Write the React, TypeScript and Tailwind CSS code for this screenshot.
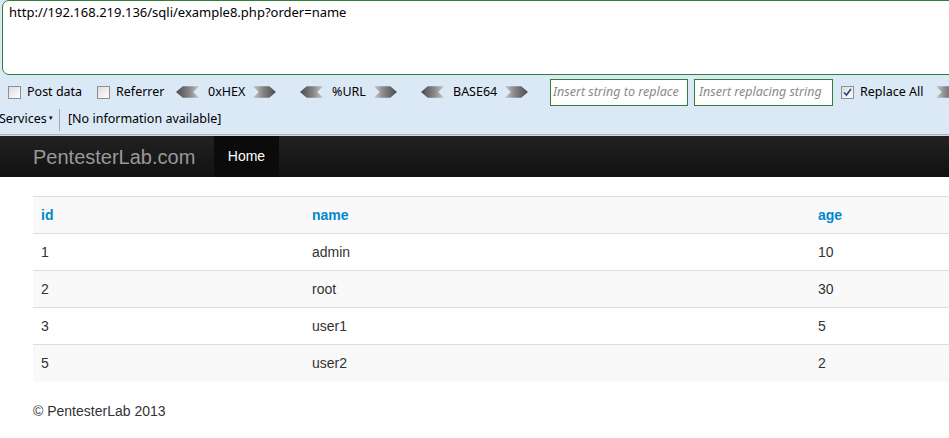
import React from 'react';

const ArrowLeft: React.FC = () => (
  <svg width="23" height="12" viewBox="0 0 24 12" className="shrink-0">
    <defs>
      <linearGradient id="gl" x1="0" y1="0" x2="1" y2="0">
        <stop offset="0" stopColor="#4a4a4a" />
        <stop offset="0.6" stopColor="#8a8a8a" />
        <stop offset="1" stopColor="#c8c8c8" />
      </linearGradient>
    </defs>
    <polygon points="0,6 7,0 24,0 18,6 24,12 7,12" fill="url(#gl)" />
  </svg>
);

const ArrowRight: React.FC = () => (
  <svg width="23" height="12" viewBox="0 0 24 12" className="shrink-0">
    <defs>
      <linearGradient id="gr" x1="0" y1="0" x2="1" y2="0">
        <stop offset="0" stopColor="#c8c8c8" />
        <stop offset="0.4" stopColor="#8a8a8a" />
        <stop offset="1" stopColor="#4a4a4a" />
      </linearGradient>
    </defs>
    <polygon points="0,0 17,0 24,6 17,12 0,12 6,6" fill="url(#gr)" />
  </svg>
);

const Box: React.FC<{ checked?: boolean }> = ({ checked }) => (
  <span className="w-[13px] h-[13px] border border-[#8e8f8f] bg-gradient-to-br from-[#dcdcdc] to-white flex items-center justify-center shrink-0">
    {checked && (
      <svg width="9" height="9" viewBox="0 0 9 9">
        <path d="M1 4.5 L3.5 7 L8 1" stroke="#2a3f8f" strokeWidth="1.6" fill="none" />
      </svg>
    )}
  </span>
);

const rows = [
  ['1', 'admin', '10'],
  ['2', 'root', '30'],
  ['3', 'user1', '5'],
  ['5', 'user2', '2'],
];

export default function App() {
  return (
    <div className="w-[949px] h-[438px] overflow-hidden bg-white">
      <div className="bg-[#dbe8f6] font-['Noto_Sans',sans-serif] text-[12.5px] text-black">
        <div className="pl-[2px] pt-0 pb-[3px]">
          <div className="w-[980px] h-[75px] bg-white border border-[#2f7f36] rounded-l-[7px] px-[6px] pt-[2px] leading-[18px] text-[13px]">
            http://192.168.219.136/sqli/example8.php?order=name
          </div>
        </div>
        <div className="h-[27px] flex items-center whitespace-nowrap pt-[1px]">
          <div className="flex items-center pl-[8px] gap-[6px] w-[97px] shrink-0">
            <Box />
            <span>Post data</span>
          </div>
          <div className="flex items-center gap-[6px] w-[79px] shrink-0">
            <Box />
            <span>Referrer</span>
          </div>
          <div className="flex items-center w-[124px] shrink-0">
            <ArrowLeft />
            <span className="ml-[9px] w-[45px]">0xHEX</span>
            <ArrowRight />
          </div>
          <div className="flex items-center w-[121px] shrink-0">
            <ArrowLeft />
            <span className="ml-[9px] w-[42px]">%URL</span>
            <ArrowRight />
          </div>
          <div className="flex items-center w-[129px] shrink-0">
            <ArrowLeft />
            <span className="ml-[9px] w-[52px]">BASE64</span>
            <ArrowRight />
          </div>
          <div className="w-[138px] h-[27px] shrink-0 bg-white border border-[#2f7f36] italic text-[12.5px] text-[#8a8a8a] flex items-center pl-[2px] overflow-hidden">
            Insert string to replace
          </div>
          <div className="ml-[6px] w-[139px] h-[27px] shrink-0 bg-white border border-[#2f7f36] italic text-[12.5px] text-[#8a8a8a] flex items-center pl-[4px] overflow-hidden">
            Insert replacing string
          </div>
          <div className="flex items-center ml-[8px] gap-[6px] w-[95px] shrink-0">
            <Box checked />
            <span>Replace All</span>
          </div>
          <ArrowRight />
        </div>
        <div className="h-[30px] flex items-center whitespace-nowrap border-b border-[#a9b3bf]">
          <span className="-ml-[1px] w-[55px] flex items-center">
            Services
            <span className="text-[6px] ml-[1px] -mt-[2px]">▼</span>
          </span>
          <span className="ml-[5px] w-px h-[22px] bg-[#a0a8b2]" />
          <span className="ml-[8px]">[No information available]</span>
        </div>
      </div>
      <div className="h-[42px] border-t border-[#d3d8de] bg-gradient-to-b from-[#222] to-[#111] flex items-stretch font-['Liberation_Sans',sans-serif]">
        <span className="ml-[33px] w-[181px] flex items-center text-[20px] text-[#999]">PentesterLab.com</span>
        <span className="w-[65px] bg-[#0b0b0b] flex items-center justify-center text-[14px] text-white">Home</span>
      </div>
      <div className="pl-[33px] pt-[19px] font-['Liberation_Sans',sans-serif] text-[14px] text-[#333]">
        <table className="w-[940px] border-collapse table-fixed">
          <colgroup>
            <col className="w-[271px]" />
            <col className="w-[506px]" />
            <col />
          </colgroup>
          <thead>
            <tr className="bg-[#f9f9f9] border-t border-[#ddd]">
              <th className="text-left font-bold text-[#0088cc] px-[8px] h-[37px]">id</th>
              <th className="text-left font-bold text-[#0088cc] px-[8px]">name</th>
              <th className="text-left font-bold text-[#0088cc] px-[8px]">age</th>
            </tr>
          </thead>
          <tbody>
            {rows.map((r, i) => (
              <tr key={r[0]} className={`border-t border-[#ddd] ${i % 2 === 1 ? 'bg-[#f9f9f9]' : 'bg-white'}`}>
                <td className="px-[8px] h-[37px]">{r[0]}</td>
                <td className="px-[8px]">{r[1]}</td>
                <td className="px-[8px]">{r[2]}</td>
              </tr>
            ))}
          </tbody>
        </table>
        <p className="mt-[19px] text-[14px] text-[#333]">© PentesterLab 2013</p>
      </div>
    </div>
  );
}
